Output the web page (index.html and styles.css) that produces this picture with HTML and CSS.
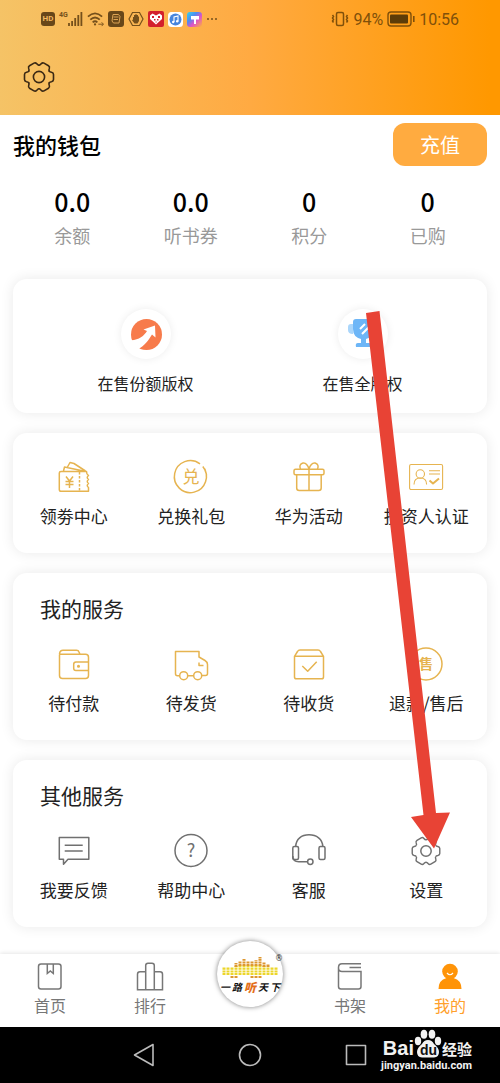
FILE: index.html
```html
<!DOCTYPE html>
<html lang="zh-CN">
<head>
<meta charset="utf-8">
<meta name="viewport" content="width=device-width, initial-scale=1">
<title>我的</title>
<link rel="stylesheet" href="styles.css">
</head>
<body>
<svg class="defs" width="0" height="0" aria-hidden="true">
  <defs>
    <path id="tooth" d="M10.2-5.900Q10.800-4.900 12.500-4.700Q14.500-4.300 14.500-2.600V2.600Q14.500 4.300 12.500 4.700Q10.800 4.900 10.200 5.900"/>
    <g id="teeth">
      <use href="#tooth"/><use href="#tooth" transform="rotate(60)"/><use href="#tooth" transform="rotate(120)"/>
      <use href="#tooth" transform="rotate(180)"/><use href="#tooth" transform="rotate(240)"/><use href="#tooth" transform="rotate(300)"/>
    </g>
  </defs>
</svg>
<div class="app">
  <header class="header">
    <div class="status">
      <div class="status-left">
        <span class="hd">HD</span>
        <span class="signal">
          <span class="net">4G</span>
          <svg width="15" height="16" viewBox="0 0 15 16" stroke="currentColor" stroke-width="1.800"><path d="M1 15v-3M4.100 15v-5M7.200 15V7M10.300 15V4M13.400 15V1"/></svg>
        </span>
        <svg width="17" height="16" viewBox="0 0 18 16" fill="none" stroke="currentColor" stroke-width="1.900"><path d="M1 5.500Q8.500-1.500 16 5.500M3.500 8.700Q8.500 4 13.500 8.700M6 11.500Q8.500 9.300 11 11.500"/><circle cx="8.500" cy="13.800" r="1.200" fill="currentColor" stroke="none"/><path d="M12 13.500h5m-1.500-2 2 2-2 2" stroke-width="1"/></svg>
        <svg width="16" height="16" viewBox="0 0 16 16"><rect width="16" height="16" rx="3" fill="#684719"/><path d="M5 3.500h5.500l1.500 2-1 6.500H5.500L4 10zM5.500 6h5M5.500 8.500h4.500" fill="none" stroke="#dca354" stroke-width="1"/></svg>
        <svg width="16" height="16" viewBox="0 0 16 16"><path d="M4.500 1.500h7L15 8l-3.500 6.500h-7L1 8z" fill="none" stroke="currentColor" stroke-width="1.200"/><path d="M5 8.500V6h1V4h1.300V3.300h1.400V4H10v1.500h1V10l-1.500 2.500h-3L4 9.300z" fill="currentColor"/></svg>
        <svg width="16" height="16" viewBox="0 0 16 16"><rect width="16" height="16" rx="2" fill="#d3202c"/><path d="M8 13.500 2 8V4.500L4.500 2.500 8 4.500l3.500-2L14 4.500V8z" fill="#fff"/><path d="M4 5h2v2H4zM10 5h2v2h-2zM6 8h1.500v1.500H6zM9 8h1.500v1.500H9zM7.500 10.500h1.200v1H7.500z" fill="#d3202c"/></svg>
        <svg width="15" height="15" viewBox="0 0 15 15"><rect width="15" height="15" rx="3.500" fill="#fff"/><circle cx="7.500" cy="7.500" r="6" fill="#4785dc"/><path d="M6 10V5l4-1v5.300" fill="none" stroke="#fff" stroke-width="1.100"/><circle cx="5.200" cy="10" r="1.200" fill="#fff"/><circle cx="9.200" cy="9.300" r="1.200" fill="#fff"/></svg>
        <svg width="15" height="15" viewBox="0 0 15 15"><defs><linearGradient id="rainbow" x2="1" y2="1"><stop stop-color="#37d6e8"/><stop offset=".35" stop-color="#4d8bf0"/><stop offset=".6" stop-color="#dc53c9"/><stop offset="1" stop-color="#ffb13c"/></linearGradient></defs><rect width="15" height="15" rx="3" fill="url(#rainbow)"/><path d="M4 4h8v3.500H9V12H7V7.500H4z" fill="#fff"/></svg>
        <svg width="12" height="4" viewBox="0 0 12 4" fill="currentColor"><circle cx="2" cy="2" r="1"/><circle cx="6" cy="2" r="1"/><circle cx="10" cy="2" r="1"/></svg>
      </div>
      <div class="status-right">
        <svg width="18" height="16" viewBox="0 0 18 16" fill="none" stroke="currentColor"><rect x="5.500" y="1.500" width="7" height="13" rx="1.500" stroke-width="1.500"/><path d="M1.500 4l1 1.500-1 1.500 1 1.500-1 1.500 1 1.500M16.500 4l-1 1.500 1 1.500-1 1.500 1 1.500-1 1.500" stroke-width="1.500"/></svg>
        <span>94%</span>
        <svg width="28" height="16" viewBox="0 0 28 16"><rect x="1" y="1" width="23" height="14" rx="3" fill="none" stroke="currentColor" stroke-width="1.400"/><rect x="3" y="3.500" width="18" height="9" rx="1" fill="#5c3c08"/><path d="M26.800 5v6" stroke="currentColor" stroke-width="1.600"/></svg>
        <time>10:56</time>
      </div>
    </div>
    <div class="toolbar">
      <button type="button" aria-label="设置">
        <svg width="32" height="32" viewBox="-16 -16 32 32" fill="none" stroke="#3a2814" stroke-width="1.600" stroke-linecap="round"><use href="#teeth"/><circle r="5.600"/></svg>
      </button>
    </div>
  </header>

  <main class="main">
    <section class="wallet">
      <div class="wallet-head">
        <h1>我的钱包</h1>
        <button class="recharge" type="button">充值</button>
      </div>
      <dl class="stats">
        <div><dt>余额</dt><dd>0.0</dd></div>
        <div><dt>听书券</dt><dd>0.0</dd></div>
        <div><dt>积分</dt><dd>0</dd></div>
        <div><dt>已购</dt><dd>0</dd></div>
      </dl>
    </section>

    <section class="card rights">
      <a class="right-item" href="#share">
        <span class="disc"><svg width="34" height="34" viewBox="0 0 34 34"><circle cx="17.500" cy="17.500" r="15.500" fill="#f77b4b"/><path d="M0 23C9 24 15 19 18 14L14.500 12.500 26 8.500l.5 12-3.500-3C19 24 16 28 9 32.500L0 32z" fill="#fff"/></svg></span>
        <span>在售份额版权</span>
      </a>
      <a class="right-item" href="#full">
        <span class="disc"><svg width="34" height="34" viewBox="0 0 34 34"><path d="M7 7H5Q2 7 2 10v3q0 4 5 4zM27 7h2q3 0 3 3v3q0 4-5 4z" fill="#aad6fb"/><path d="M7 5q0-3 3-3h14q3 0 3 3v7q0 8-7 10v4h3q2 0 2 4H10q-1-4 2-4h3v-4q-8-2-8-10z" fill="#6db6f7"/><path d="M14 12l5-5M16 17l7-7" stroke="#fff" stroke-width="2"/></svg></span>
        <span>在售全版权</span>
      </a>
    </section>

    <section class="card">
      <div class="grid gold">
        <a href="#coupon"><svg class="ico" viewBox="0 0 34 34"><path d="M4 11.500h25.500q0 3 2 4-2.500 2 0 4-2.500 2 0 4-2.500 2 0 4v3.800H4q-1.700 0-1.700-1.700V13q0-1.500 1.700-1.500zM6.500 11l1-4 19 4M10.500 7l2.500-4.500 4 1L28.500 11"/><path d="M22.500 12v19" stroke-dasharray="2.500 1.500"/><path d="M9 16.500l3.500 4.500 3.500-4.500M12.500 21v7M8.500 21.500h8M8.500 24.500h8"/></svg><span>领劵中心</span></a>
        <a href="#redeem"><svg class="ico" viewBox="0 0 34 34"><path d="M28.800 6.500A16 16 0 1 1 26 3.800M30.500 8.500l1 2"/><text x="17" y="23" font-size="17">兑</text></svg><span>兑换礼包</span></a>
        <a href="#events"><svg class="ico" viewBox="0 0 34 34"><rect x="2" y="9.300" width="30" height="5.500" rx="1.500"/><path d="M4.700 15v13q0 2.500 2.500 2.500h19.500q2.500 0 2.500-2.500V15M17 9v21M17 9Q15 2.500 11 3 6.500 4.500 8.500 9M17 9q2-6.500 6-6 4.500 1.500 2.500 6"/></svg><span>华为活动</span></a>
        <a href="#investor"><svg class="ico thin" viewBox="0 0 34 34"><rect x=".6" y="4.500" width="33" height="25" rx="1.500"/><circle cx="11.300" cy="14" r="4.200"/><path d="M5 24.500q0-6.500 6.300-6.500t6.300 6.500M20 10.700h11M20 14h11"/><path d="M20.500 20.500l3.500 3 6-5" stroke-width="2"/></svg><span>投资人认证</span></a>
      </div>
    </section>

    <section class="card">
      <h2>我的服务</h2>
      <div class="grid gold">
        <a href="#unpaid"><svg class="ico" viewBox="0 0 34 34"><path d="M2.500 7.500v21q0 3 3 3h23q3 0 3-3V10.300q0-3-3-3H4.500q-2 0-2-.5Q3 3.300 6 3.300h13.500q2 0 2.500 1.700l1 2.300M31.500 15H19q-2.300 0-2.300 2.300v4q0 2.300 2.300 2.300h12.500"/><circle cx="21.500" cy="19.300" r=".8"/></svg><span>待付款</span></a>
        <a href="#unshipped"><svg class="ico" viewBox="0 0 34 34"><path d="M5.700 28.700H3.500q-2 0-2-2V4.500H25v5.500l6 3.500q2.500 1.500 2.500 4v9q0 2-2 2h-3.800M19.700 28.700h-6M25 15.500v3h4.500"/><circle cx="9.700" cy="28.700" r="4"/><circle cx="23.700" cy="28.700" r="4"/></svg><span>待发货</span></a>
        <a href="#receiving"><svg class="ico" viewBox="0 0 34 34"><path d="M2.500 9.300h29V30q0 1.800-1.800 1.800H4.300q-1.800 0-1.800-1.800zM2.500 9.300 5.500 4.500Q6.300 3 8 3h18q1.700 0 2.500 1.500l3 4.800M10.300 19l5.400 5.300 9-9.500"/></svg><span>待收货</span></a>
        <a href="#refund"><svg class="ico" viewBox="0 0 34 34"><circle cx="17" cy="17" r="16"/><text x="17" y="22" font-size="14" font-weight="700">售</text></svg><span>退款/售后</span></a>
      </div>
    </section>

    <section class="card">
      <h2>其他服务</h2>
      <div class="grid gray">
        <a href="#feedback"><svg class="ico" viewBox="0 0 34 34"><path d="M2.300 3.500h29.500v21.700H11l-4.500 5v-5H2.300zM7.700 11.300h18M7.700 17h18"/></svg><span>我要反馈</span></a>
        <a href="#help"><svg class="ico" viewBox="0 0 34 34"><circle cx="17" cy="16.500" r="16"/><text x="17" y="23" font-size="18">?</text></svg><span>帮助中心</span></a>
        <a href="#service"><svg class="ico" viewBox="0 0 34 34"><path d="M3.700 12.500C4 5 9.500.8 17 .8S30.500 5 30.800 12.500"/><rect x=".8" y="12.500" width="5.700" height="13" rx="1.500"/><rect x="27" y="12.500" width="6" height="13" rx="1.500"/><path d="M.8 22q0 5.700 6 5.700h8.500"/><circle cx="18.300" cy="27.700" r="2.700"/></svg><span>客服</span></a>
        <a href="#settings"><svg class="ico" viewBox="-17 -17 34 34"><use href="#teeth" transform="scale(.95)"/><circle r="5.200"/></svg><span>设置</span></a>
      </div>
    </section>
  </main>

  <nav class="tabs">
    <a href="#home"><svg width="30" height="30" viewBox="0 0 30 30"><rect x="3.500" y="2" width="22.500" height="25" rx="2.500"/><path d="M12.300 2v9.500l3-2.500 3 2.500V2"/></svg><span>首页</span></a>
    <a href="#rank"><svg width="30" height="30" viewBox="0 0 30 30"><path d="M10.700 9.700H5q-2.500 0-2.500 2.500v15.500h25V12.200q0-2.500-2.500-2.500h-5.700M10.700 27.700V3.500q0-2.300 2.300-2.300h4q2.300 0 2.300 2.300v24.200"/></svg><span>排行</span></a>
    <a class="brand" href="#listen" aria-label="一路听天下">
      <svg class="bars" width="60" height="24" viewBox="0 0 60 24">
        <path stroke="#ecd62a" d="M4 19v-8M8 19v-8M12 19v-8M16 19v-9M20 19V9M24 19V9M28 19V9M32 19V9M36 19V9M40 19V9M44 19v-9M48 19v-8M52 19v-8M56 19v-8"/>
        <path stroke="#dd9730" d="M16 11V7M20 10V5M24 10V3M28 10V5M32 10V5M36 10V4M40 10V1M44 11V6M48 11V8M12 22v-2M16 22v-2M32 22v-2M36 22v-2M40 22v-2"/>
      </svg>
      <span class="brand-name"><i>一</i><i>路</i><b>听</b><i>天</i><i>下</i></span>
      <span class="mark">®</span>
    </a>
    <a href="#shelf"><svg width="30" height="30" viewBox="0 0 30 30"><path d="M26 1.800H7Q3.500 1.800 3.500 5.500V24.500Q3.500 27 6 27H23.500Q26 27 26 24.500V9.500H7Q3.500 9.500 3.500 6M14.500 5.500H26"/></svg><span>书架</span></a>
    <a class="active" href="#mine" aria-current="page"><svg width="30" height="30" viewBox="0 0 30 30"><circle cx="15" cy="9.500" r="7.800" fill="#ff9408" stroke="none"/><path d="M3.500 27q0-9 8-11h7q8 2 8 11z" fill="#ff9408" stroke="none"/><path d="M12 11q3 3.500 6 0" stroke="#fff" stroke-width="1.200"/></svg><span>我的</span></a>
  </nav>

  <footer class="system">
    <button type="button" aria-label="返回"><svg width="24" height="24" viewBox="0 0 24 24"><path d="M21 1.500v21L2.500 12z"/></svg></button>
    <button type="button" aria-label="主屏幕"><svg width="24" height="24" viewBox="0 0 24 24"><circle cx="12" cy="12" r="10.500"/></svg></button>
    <button type="button" aria-label="最近任务"><svg width="24" height="24" viewBox="0 0 24 24"><path d="M2.500 2.500h19v19h-19z"/></svg></button>
    <div class="watermark">
      <div class="wm-top">
        <span class="bai">Bai</span>
        <span class="paw">
          <svg width="28" height="30" viewBox="0 0 28 30" fill="#f2f2f2"><ellipse cx="4" cy="12" rx="3.200" ry="4.200"/><ellipse cx="10" cy="5.200" rx="3.300" ry="4.500"/><ellipse cx="18" cy="5.200" rx="3.300" ry="4.500"/><ellipse cx="24" cy="12" rx="3.200" ry="4.200"/><path d="M14 11q4 0 6 4 5 4 5 8 0 5-5 5.500H8Q3 28 3 23q0-4 5-8 2-4 6-4z"/></svg>
          <span class="du">du</span>
        </span>
        <span class="jy">经验</span>
      </div>
      <div class="url">jingyan.baidu.com</div>
    </div>
  </footer>

  <svg class="pointer" width="88" height="540" viewBox="0 0 88 540" aria-hidden="true"><path d="M2 3 15.500 1 72 503 86 502.500 70 538.500 47 507 59.500 505z" fill="#e84335"/></svg>
</div>
</body>
</html>
```
FILE: styles.css
```css
* { box-sizing: border-box; }

body {
  margin: 0;
  background: #fff;
  color: #222;
  font-family: "Noto Sans CJK SC", sans-serif;
}

a { color: inherit; text-decoration: none; }
svg { display: block; flex: none; }
h1, h2, dl, dd { margin: 0; }
button { border: 0; padding: 0; background: none; font: inherit; color: inherit; }

.defs { position: absolute; }
.app { position: relative; }

.header { background: linear-gradient(90deg, #f5c366, #ffaa42 50%, #ff9800 98%); }

.status {
  display: flex;
  justify-content: space-between;
  align-items: center;
  height: 38px;
  padding: 0 41px;
  color: #75501b;
  font-family: Roboto, sans-serif;
  font-size: 16px;
}
.status-left { display: flex; align-items: center; gap: 4px; }
.status-right { display: flex; align-items: center; gap: 4px; color: #80500a; }
.hd {
  width: 14px;
  border-radius: 3px;
  background: #684719;
  color: #f3b95f;
  font-size: 8px;
  font-weight: 700;
  line-height: 14px;
  text-align: center;
}
.signal { display: flex; align-items: flex-start; }
.net { font-size: 7px; font-weight: 700; line-height: 8px; }

.toolbar { display: flex; align-items: center; height: 77px; padding: 0 23px; }

.wallet { padding: 8px 13px 32px; }
.wallet-head { display: flex; justify-content: space-between; align-items: center; }
.wallet h1 { color: #000; font-size: 22px; font-weight: 500; line-height: 43px; }
.recharge {
  width: 94px;
  border-radius: 12px;
  background: #ffab40;
  color: #fff;
  font-size: 20px;
  line-height: 43px;
}
.stats { display: grid; grid-template-columns: repeat(4, 1fr); margin-top: 19px; text-align: center; }
.stats div { display: flex; flex-direction: column-reverse; gap: 6px; }
.stats dd { color: #000; font-size: 25px; font-weight: 500; line-height: 32px; }
.stats dt { color: #999; font-size: 18px; line-height: 24px; }

.card {
  margin: 0 13px 20px;
  padding: 20px 2px 25px;
  border-radius: 14px;
  background: #fff;
  box-shadow: 0 0 14px rgba(0, 0, 0, .09);
}
.card:last-child { margin-bottom: 27px; }
.card h2 { margin: 0 25px 24px; font-size: 21px; font-weight: 400; line-height: 30px; }
.card .grid:first-child { padding-top: 7px; }

.rights { display: grid; grid-template-columns: 1fr 1fr; padding: 30px 16px 18px 24px; }
.right-item { display: flex; flex-direction: column; align-items: center; gap: 12px; font-size: 16px; line-height: 24px; }
.disc {
  display: flex;
  align-items: center;
  justify-content: center;
  width: 50px;
  height: 50px;
  border-radius: 50%;
  box-shadow: 0 0 8px rgba(0, 0, 0, .08);
}

.grid { display: grid; grid-template-columns: repeat(4, 1fr); }
.grid a {
  display: flex;
  flex-direction: column;
  align-items: center;
  gap: 10px;
  font-size: 17px;
  line-height: 24px;
  white-space: nowrap;
}
.ico {
  width: 34px;
  height: 34px;
  overflow: visible;
  fill: none;
  stroke: currentColor;
  stroke-width: 1.5;
  stroke-linejoin: round;
}
.ico text { fill: currentColor; stroke: none; text-anchor: middle; }
.thin { stroke-width: 1.1; }
.gold .ico { color: #e6b450; }
.gray .ico { color: #707070; }

.tabs {
  display: grid;
  grid-template-columns: repeat(5, 1fr);
  justify-items: center;
  height: 73px;
  padding-top: 8px;
  background: #fff;
  box-shadow: 0 -1px 4px rgba(0, 0, 0, .1);
  color: #777;
}
.tabs a { display: flex; flex-direction: column; align-items: center; gap: 2px; font-size: 16px; line-height: 22px; }
.tabs svg { fill: none; stroke: currentColor; stroke-width: 1.5; }
.tabs .active { color: #ffa02c; }
.tabs .brand {
  position: relative;
  width: 66px;
  height: 66px;
  margin-top: -21px;
  padding-top: 15px;
  border-radius: 50%;
  background: #fff;
  box-shadow: 0 0 5px rgba(0, 0, 0, .5);
  gap: 0;
}
.tabs .bars { stroke-width: 3; stroke-dasharray: 2 .6; }
.brand-name { display: flex; align-items: center; gap: 2px; color: #111; font-size: 10px; font-weight: 700; line-height: 14px; }
.brand-name b { color: #e46f1c; font-size: 12px; font-style: italic; }
.mark { position: absolute; top: 13px; right: 0; color: #333; font-family: "DejaVu Sans", sans-serif; font-size: 8px; line-height: 10px; }

.system {
  position: relative;
  display: grid;
  grid-template-columns: repeat(3, 106px);
  justify-content: center;
  align-items: center;
  justify-items: center;
  height: 56px;
  background: #000;
}
.system button svg { fill: none; stroke: #bbb; stroke-width: 1.6; stroke-linejoin: round; }

.watermark { position: absolute; top: 2px; right: 28px; color: #f2f2f2; font-weight: 700; }
.wm-top { display: flex; align-items: flex-end; justify-content: flex-end; height: 30px; }
.bai { font-family: "Liberation Sans", sans-serif; font-size: 20px; line-height: 22px; }
.paw { position: relative; }
.du {
  position: absolute;
  left: 6px;
  bottom: 2px;
  color: #111;
  font-family: "Liberation Sans", sans-serif;
  font-size: 14px;
  line-height: 14px;
}
.jy { font-size: 15px; line-height: 20px; }
.url { font-family: Roboto, sans-serif; font-size: 11px; line-height: 14px; text-align: right; }

.pointer { position: absolute; top: 310px; left: 364px; pointer-events: none; }
```
